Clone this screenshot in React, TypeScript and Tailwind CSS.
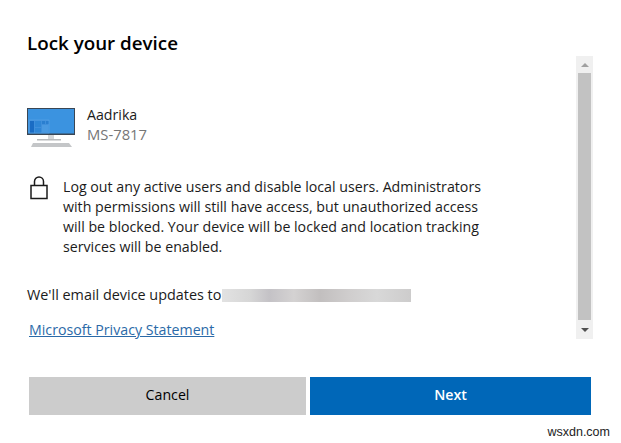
export default function App() {
  return (
    <div className="w-[621px] h-[443px] bg-white overflow-hidden flex flex-col font-['Open_Sans',sans-serif] text-[14.2px] text-[#1b1b1b]">
      <h1 className="pl-[27px] pt-[31px] h-[56px] text-[18.8px] leading-[25px] font-semibold text-black shrink-0">Lock your device</h1>
      <div className="flex h-[283px] shrink-0 pl-[27px]">
        <div className="w-[549px] flex flex-col">
          <div className="flex items-start pt-[52px]">
            <svg width="48" height="40" viewBox="0 0 48 40" className="shrink-0">
              <rect x="0" y="0" width="48" height="27" fill="#3a4654" />
              <rect x="1" y="1" width="46" height="24.5" fill="#3b93e0" />
              <rect x="2" y="12" width="20" height="13" fill="#3f8fdc" stroke="#5aa6e6" strokeWidth="0.6" />
              <rect x="3" y="13" width="4" height="11.5" fill="#1a6cc4" />
              <rect x="8" y="13" width="6" height="6" fill="#2f86d6" />
              <rect x="8" y="20" width="6" height="4.5" fill="#2f86d6" />
              <rect x="15" y="13" width="3" height="3" fill="#2a7fd0" />
              <rect x="19" y="13" width="2.5" height="3" fill="#2a7fd0" />
              <rect x="15" y="17" width="6.5" height="7.5" fill="#4a9ae2" />
              <rect x="21" y="27" width="6" height="5" fill="#d4d6d8" />
              <rect x="10" y="31" width="24" height="1.5" fill="#b8babc" />
              <path d="M4 39 L6 35 H42 L45 39 Z" fill="#c4c6c8" />
            </svg>
            <div className="ml-[12px] -mt-[3px] leading-[20px]">
              <div>Aadrika</div>
              <div className="text-[#767676] text-[14.8px] -mt-[1px]">MS-7817</div>
            </div>
          </div>
          <div className="flex items-start mt-[27px]">
            <svg width="18" height="25" viewBox="0 0 18 25" className="ml-[3px] shrink-0" fill="none" stroke="#1b1b1b" strokeWidth="1.5">
              <rect x="1" y="10.5" width="16" height="13" />
              <path d="M4.5 10.5 V6.5 a4.5 4.5 0 0 1 9 0 V10.5" />
            </svg>
            <p className="ml-[15px] leading-[20px] whitespace-nowrap mt-[2px]">
              Log out any active users and disable local users. Administrators<br />
              with permissions will still have access, but unauthorized access<br />
              will be blocked. Your device will be locked and location tracking<br />
              services will be enabled.
            </p>
          </div>
          <div className="flex items-center mt-[28px] leading-[20px]">
            <span className="text-[14.4px]">We'll email device updates to</span>
            <div className="ml-[1px] w-[189px] h-[13px] bg-[linear-gradient(90deg,#e2e2e2_0%,#d6d6d6_15%,#c4c2c6_25%,#d4d2d2_38%,#c2bfbf_52%,#d0cece_68%,#d8d8d8_82%,#cdcccc_100%)]" />
          </div>
          <a className="block ml-[2px] mt-[15px] leading-[20px] text-[#2b6aa8] underline w-fit">Microsoft Privacy Statement</a>
        </div>
        <div className="w-[17px] h-full bg-[#f0f0f0] flex flex-col items-center">
          <div className="h-[17px] flex items-center justify-center">
            <div className="w-0 h-0 border-x-[4px] border-x-transparent border-b-[4px] border-b-[#a0a0a0]" />
          </div>
          <div className="w-[13px] flex-1 bg-[#c2c2c2]" />
          <div className="h-[19px] flex items-center justify-center">
            <div className="w-0 h-0 border-x-[4px] border-x-transparent border-t-[4px] border-t-[#505050]" />
          </div>
        </div>
      </div>
      <div className="flex gap-[4px] pl-[29px] mt-[38px] shrink-0">
        <button className="w-[277px] h-[38px] pb-[2px] bg-[#cccccc] text-[14.2px] font-medium text-black">Cancel</button>
        <button className="w-[281px] h-[38px] pb-[2px] bg-[#0067b8] text-[14.2px] font-semibold text-white">Next</button>
      </div>
      <div className="self-end mr-[11px] mt-[8px] text-[12.5px] leading-[18px] font-['Liberation_Sans',sans-serif] text-[#222]">wsxdn.com</div>
    </div>
  )
}
